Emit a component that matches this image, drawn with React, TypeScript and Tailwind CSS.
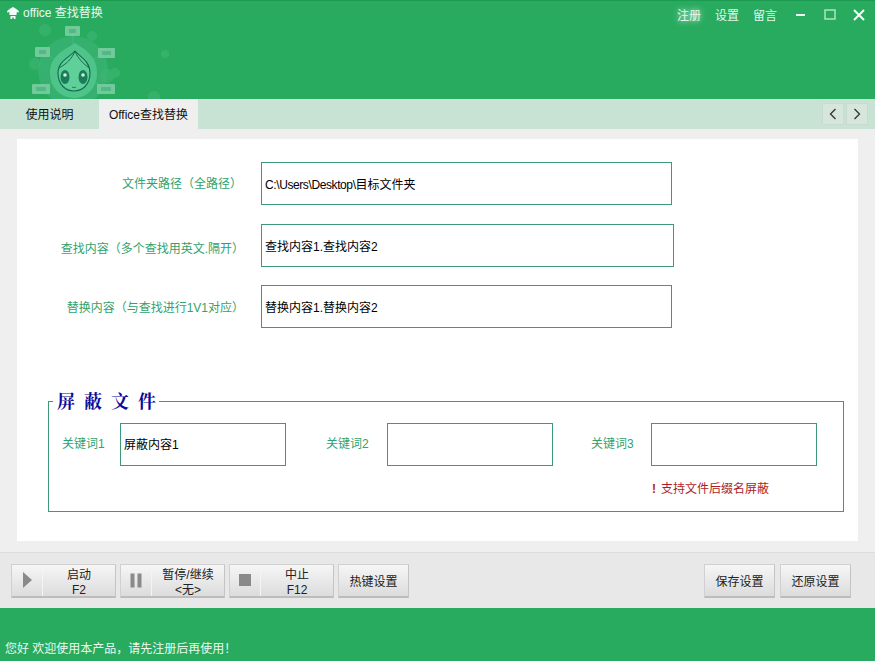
import React from "react";

const font = { fontFamily: '"Liberation Sans","Noto Sans CJK SC",sans-serif' };

function Mascot() {
  const tag = (x: number, y: number, w = 18) => (
    <g>
      <rect x={x} y={y} width={w} height={10} rx="1" fill="#7ccfa3" opacity="0.85" />
      <rect x={x + 4} y={y + 3} width={w - 8} height={4} fill="#46b27d" opacity="0.7" />
    </g>
  );
  return (
    <svg width="180" height="98" viewBox="0 0 180 98" className="block">
      <g fill="#4dbb80" opacity="0.4">
        <circle cx="45" cy="29" r="6" />
        <circle cx="35" cy="63" r="6" />
        <circle cx="92" cy="35" r="5" />
        <circle cx="107" cy="75" r="7" />
        <circle cx="115" cy="72" r="5" />
        <circle cx="165" cy="53" r="4" />
        <circle cx="154" cy="96" r="6" />
      </g>
      <g stroke="#6ccb98" strokeWidth="1" fill="none" opacity="0.6">
        <path d="M73 35 V44" />
        <path d="M50 55 L58 62" />
        <path d="M98 55 L90 62" />
        <path d="M48 84 L57 78" />
        <path d="M99 84 L90 78" />
      </g>
      <circle cx="73" cy="70" r="35" fill="#3fb57a" opacity="0.55" />
      {tag(65, 25, 15)}
      {tag(35, 46, 15)}
      {tag(98, 47, 17)}
      {tag(32, 83, 18)}
      {tag(97, 83, 18)}
      <path d="M75 42 C66 48 50 54 50 72 C50 88 62 97 74 97 C86 97 97 88 97 72 C97 54 84 48 75 42 Z" fill="#4fc48a" />
      <path d="M75 50 C70 56 58 60 58 72 C58 84 66 90 74 90 C82 90 90 84 90 72 C90 60 80 56 75 50 Z" fill="#5fd09a" stroke="#136a4a" strokeWidth="1.1" />
      <path d="M75 50 C72 58 66 63 59 67 M75 50 C78 58 84 63 89 67" stroke="#136a4a" strokeWidth="1" fill="none" />
      <ellipse cx="65" cy="76" rx="4.5" ry="7" fill="#1c7c5a" />
      <ellipse cx="83" cy="76" rx="4.5" ry="7" fill="#1c7c5a" />
      <circle cx="65" cy="74" r="1.8" fill="#c9f4dc" />
      <circle cx="83" cy="74" r="1.8" fill="#c9f4dc" />
      <path d="M72 86 Q74 87.5 76 86" stroke="#136a4a" fill="none" strokeWidth="0.8" />
    </svg>
  );
}

function AppGlyph() {
  return (
    <svg width="14" height="14" viewBox="0 0 14 14" className="shrink-0">
      <path d="M7 1 C9.5 2.5 13 4 13 6.5 L10.8 6 L10.5 9 L3.5 9 L3.2 6 L1 6.5 C1 4 4.5 2.5 7 1 Z" fill="#f2fbf6" />
      <path d="M4.5 10 H9.5 V13 H7.8 V11.4 H6.2 V13 H4.5 Z" fill="#f2fbf6" />
    </svg>
  );
}

function Field({ label, value, inputW, rowClass = "", labelClass = "" }: { label: string; value: React.ReactNode; inputW: string; rowClass?: string; labelClass?: string }) {
  return (
    <div className={`flex items-center h-[43px] ${rowClass}`}>
      <div className={`w-[211px] text-right text-[12px] text-[#32a26c] whitespace-nowrap ${labelClass}`}>{label}</div>
      <div className={`ml-[17px] h-[43px] ${inputW} border border-[#40987a] bg-white flex items-center pl-[3px] pt-[2px] text-[12px] text-black`}>
        {value}
      </div>
    </div>
  );
}

function Keyword({ label, value, labelW, className = "" }: { label: string; value?: string; labelW: string; className?: string }) {
  return (
    <div className={`flex items-start ${className}`}>
      <div className={`text-[12px] leading-[16px] mt-[13px] text-[#32a26c] whitespace-nowrap ${labelW}`}>{label}</div>
      <div className="w-[166px] h-[43px] border border-[#40987a] bg-white flex items-center pl-[3px] pt-[1px] text-[12px] text-black">{value}</div>
    </div>
  );
}

function Btn({ icon, l1, l2, w }: { icon: React.ReactNode; l1: string; l2: string; w: string }) {
  return (
    <div className={`${w} h-[34px] flex border border-[#d0d0d0] border-b-[2px] border-b-[#bdbdbd] border-r-[#c4c4c4] rounded-[1px] bg-gradient-to-b from-[#f6f6f6] to-[#dcdcdc] text-[#222]`}>
      <div className="w-[31px] shrink-0 flex items-center justify-center border-r border-[#f4f4f4]">{icon}</div>
      <div className="flex-1 flex flex-col items-center justify-center pt-[5px] text-[12px] leading-[15px]">
        <span>{l1}</span>
        <span>{l2}</span>
      </div>
    </div>
  );
}

function PlainBtn({ text, w }: { text: string; w: string }) {
  return (
    <div className={`${w} h-[34px] flex items-center justify-center pt-[4px] border border-[#d0d0d0] border-b-[2px] border-b-[#bdbdbd] border-r-[#c4c4c4] rounded-[1px] bg-gradient-to-b from-[#f6f6f6] to-[#dcdcdc] text-[12px] text-[#222]`}>
      {text}
    </div>
  );
}

export default function App() {
  return (
    <div className="w-[875px] h-[661px] overflow-hidden flex flex-col bg-[#efefef]" style={font}>
      {/* Title area */}
      <div className="h-[99px] shrink-0 bg-[#28ab5f] border-t border-[#1c9a52] relative">
        <div className="absolute left-0 top-0"><Mascot /></div>
        <div className="relative flex items-center h-[24px] pl-[6px] text-[12px] text-[#eafaf1]">
          <AppGlyph />
          <span className="ml-[3px]">office 查找替换</span>
          <div className="ml-auto mt-[4px] flex items-center text-[12px] text-[#e6f7ed]">
            <span className="mr-[14px] mt-[2px] [text-shadow:0_0_6px_#ffffff]">注册</span>
            <span className="mr-[14px] mt-[2px]">设置</span>
            <span className="mr-[18px] mt-[2px]">留言</span>
            <svg width="12" height="12" viewBox="0 0 12 12" className="mr-[17px]"><rect x="1" y="5" width="9" height="2" fill="#eefbf3" /></svg>
            <svg width="12" height="12" viewBox="0 0 12 12" className="mr-[17px]"><rect x="1" y="1" width="10" height="9" fill="none" stroke="#a8e6c2" strokeWidth="1.5" /></svg>
            <svg width="12" height="12" viewBox="0 0 12 12" className="mr-[10px]"><path d="M1 1 L11 11 M11 1 L1 11" stroke="#f4fcf7" strokeWidth="2" /></svg>
          </div>
        </div>
      </div>

      {/* Tabs */}
      <div className="h-[30px] shrink-0 bg-[#c8e3d3] flex items-stretch">
        <div className="w-[99px] flex items-center justify-center pt-[2px] text-[12px] text-[#111]">使用说明</div>
        <div className="w-[99px] bg-[#efefef] flex items-center justify-center pt-[2px] text-[12px] text-[#111]">Office查找替换</div>
        <div className="ml-auto flex items-center pr-[7px] gap-[2px]">
          <div className="w-[22px] h-[22px] bg-[#d6e6dc] border border-[#c9dbd0] flex items-center justify-center">
            <svg width="10" height="12" viewBox="0 0 10 12"><path d="M7.5 1 L2.5 6 L7.5 11" fill="none" stroke="#333" strokeWidth="1.3" /></svg>
          </div>
          <div className="w-[22px] h-[22px] bg-[#d6e6dc] border border-[#c9dbd0] flex items-center justify-center">
            <svg width="10" height="12" viewBox="0 0 10 12"><path d="M2.5 1 L7.5 6 L2.5 11" fill="none" stroke="#333" strokeWidth="1.3" /></svg>
          </div>
        </div>
      </div>

      {/* Main */}
      <div className="h-[424px] shrink-0 pt-[10px] pl-[17px] pr-[17px] pb-[11px] border-b border-[#dcdcdc]">
        <div className="h-full bg-white pt-[23px] pl-[16px] text-[12px]">
          <Field label="文件夹路径（全路径）" value={<span><span className="tracking-[-0.4px]">C:\Users\Desktop\</span>目标文件夹</span>} inputW="w-[411px]" labelClass="pr-[2px]" />
          <Field label="查找内容（多个查找用英文.隔开）" value="查找内容1.查找内容2" inputW="w-[413px]" rowClass="mt-[19px]" labelClass="pt-[6px]" />
          <Field label="替换内容（与查找进行1V1对应）" value="替换内容1.替换内容2" inputW="w-[411px]" rowClass="mt-[18px]" labelClass="pt-[2px]" />
          <fieldset className="mt-[61px] ml-[15px] w-[796px] h-[123px] border border-[#40987a] pl-[13px]">
            <legend className="-ml-[9px] pl-[4px] w-[106px] h-[24px] text-[18px] leading-[22px] font-bold tracking-[9px] whitespace-nowrap text-[#0a0a9a]" style={{ fontFamily: '"Noto Serif CJK SC","Noto Sans CJK SC",serif' }}>屏蔽文件</legend>
            <div className="flex mt-[10px]">
              <Keyword label="关键词1" value="屏蔽内容1" labelW="w-[58px]" />
              <Keyword label="关键词2" labelW="w-[61px]" className="ml-[40px]" />
              <Keyword label="关键词3" labelW="w-[60px]" className="ml-[38px]" />
            </div>
            <div className="mt-[15px] ml-[590px] text-[12px] leading-[16px] text-[#b01c24] whitespace-nowrap">
              <span className="font-bold mr-[5px]">!</span>支持文件后缀名屏蔽
            </div>
          </fieldset>
        </div>
      </div>

      {/* Toolbar */}
      <div className="h-[55px] shrink-0 bg-[#e8e8e8] flex items-center pl-[11px] pr-[24px]">
        <div className="flex gap-[4px]">
          <Btn w="w-[105px]" l1="启动" l2="F2" icon={<svg width="12" height="16" viewBox="0 0 12 16"><path d="M2 0 L11 8 L2 16 Z" fill="#8a8a8a" /></svg>} />
          <Btn w="w-[105px]" l1="暂停/继续" l2="<无>" icon={<svg width="12" height="15" viewBox="0 0 12 15"><rect x="0.5" y="0.5" width="4" height="14" fill="#8a8a8a" /><rect x="7.5" y="0.5" width="4" height="14" fill="#8a8a8a" /></svg>} />
          <Btn w="w-[105px]" l1="中止" l2="F12" icon={<svg width="12" height="12" viewBox="0 0 12 12"><rect width="12" height="12" fill="#8a8a8a" /></svg>} />
          <PlainBtn text="热键设置" w="w-[71px]" />
        </div>
        <div className="ml-auto flex gap-[5px]">
          <PlainBtn text="保存设置" w="w-[71px]" />
          <PlainBtn text="还原设置" w="w-[71px]" />
        </div>
      </div>

      {/* Footer */}
      <div className="flex-1 bg-[#28ab5f] flex items-end pl-[5px] pb-[3px] text-[12px] text-[#eafaf1]">
        您好 欢迎使用本产品，请先注册后再使用！
      </div>
    </div>
  );
}
